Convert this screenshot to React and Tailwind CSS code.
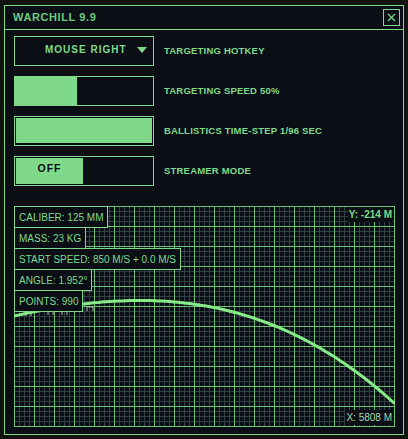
import React from "react";

const GREEN = "#80d98a";

// trajectory samples in graph space (381 x 221)
function trajectoryPath() {
  const pts = [];
  for (let x = 0; x <= 380; x += 4) {
    const d = x - 126;
    const y = 94.5 + 0.001179 * d * d + 0.000001611 * d * d * d;
    pts.push(`${x},${y.toFixed(1)}`);
  }
  return "M" + pts.join(" L");
}

function Grid() {
  const w = 381;
  const h = 221;
  const minor = [];
  const major = [];
  for (let x = 0; x <= 380; x += 5) {
    (x % 20 === 0 ? major : minor).push(
      <line key={"v" + x} x1={x + 0.5} y1={0} x2={x + 0.5} y2={h} />
    );
  }
  for (let y = 0; y <= 220; y += 5) {
    (y % 20 === 0 ? major : minor).push(
      <line key={"h" + y} x1={0} y1={y + 0.5} x2={w} y2={y + 0.5} />
    );
  }
  return (
    <svg width={w} height={h} className="absolute inset-0">
      <g stroke="#323f44" strokeWidth="1">{minor}</g>
      <g stroke="#6cc177" strokeWidth="1">{major}</g>
      <g fill="none" stroke="#b8c8b8" strokeWidth="1.2" opacity="0.8">
        <path d="M12 110 v-5 h5 v5" />
        <path d="M34 109 v-5 h5 v5" />
        <path d="M48 109 v-5 h5 v5" />
        <path d="M73 105 v-4 h6 v4" />
      </g>
      <path
        d={trajectoryPath()}
        fill="none"
        stroke="#86ec86"
        strokeWidth="3"
        strokeLinecap="round"
        strokeLinejoin="round"
      />
    </svg>
  );
}

function InfoBox({ children }) {
  return (
    <div className="self-start -mt-px first:mt-0 border border-[#80d98a] bg-[#0b0e15] h-[22px] px-[4px] flex items-center text-[10px] text-[#80d98a] whitespace-nowrap">
      {children}
    </div>
  );
}

function Row({ label, children }) {
  return (
    <div className="flex items-center">
      <div className="w-[140px] h-[30px] border border-[#80d98a] flex">
        {children}
      </div>
      <span className="ml-[10px] text-[9.5px] font-bold tracking-[0.2px] text-[#80d98a]">
        {label}
      </span>
    </div>
  );
}

export default function App() {
  return (
    <div
      className="min-h-screen bg-[#13130f] pt-[5px] pl-[4px]"
      style={{ fontFamily: '"Liberation Sans", Arial, sans-serif' }}
    >
      <div className="w-[400px] h-[430px] border border-[#80d98a] bg-[#0b0e15] flex flex-col">
        {/* title bar */}
        <div className="h-[24px] border-b border-[#80d98a] flex items-center justify-between pl-[8px] pr-[3px]">
          <span className="text-[11px] font-bold tracking-[0.6px] text-[#6fcb7c]">
            WARCHILL 9.9
          </span>
          <button className="w-[17px] h-[17px] border border-[#80d98a] flex items-center justify-center">
            <svg width="9" height="9" viewBox="0 0 9 9">
              <path d="M1 1 L8 8 M8 1 L1 8" stroke={GREEN} strokeWidth="1.2" />
            </svg>
          </button>
        </div>

        <div className="flex flex-col px-[9px] pt-[6px]">
          <div className="flex flex-col gap-[10px]">
            <Row label="TARGETING HOTKEY">
              <div className="flex-1 flex items-center pl-[30px] pr-[6px] pb-[3px]">
                <span className="text-[10px] font-bold tracking-[1px] text-[#80d98a]">
                  MOUSE RIGHT
                </span>
                <svg width="10" height="6" viewBox="0 0 10 6" className="ml-auto">
                  <path d="M0 0 H10 L5 6 Z" fill={GREEN} />
                </svg>
              </div>
            </Row>
            <Row label="TARGETING SPEED 50%">
              <div className="w-[62px] h-full bg-[#80d98a]" />
            </Row>
            <Row label="BALLISTICS TIME-STEP 1/96 SEC">
              <div className="flex-1 p-px pb-[2px]">
                <div className="w-full h-full bg-[#80d98a]" />
              </div>
            </Row>
            <Row label="STREAMER MODE">
              <div className="p-px flex">
                <div className="w-[67px] h-full bg-[#80d98a] flex items-center justify-center pb-[4px]">
                  <span className="text-[10.5px] font-bold tracking-[1px] text-[#0b0e15]">
                    OFF
                  </span>
                </div>
              </div>
            </Row>
          </div>

          {/* trajectory graph */}
          <div className="relative mt-[20px] w-[381px] h-[221px]">
            <Grid />
            <div className="relative flex flex-col">
              <InfoBox>CALIBER: 125 MM</InfoBox>
              <InfoBox>MASS: 23 KG</InfoBox>
              <InfoBox>START SPEED: 850 M/S + 0.0 M/S</InfoBox>
              <InfoBox>ANGLE: 1.952°</InfoBox>
              <InfoBox>POINTS: 990</InfoBox>
            </div>
            <span className="absolute top-[1px] right-[2px] px-[1px] bg-[#0b0e15] text-[10px] font-bold text-[#80d98a]">
              Y: -214 M
            </span>
            <span className="absolute bottom-[2px] right-[2px] px-[1px] bg-[#0b0e15] text-[10px] text-[#a8d8ac]">
              X: 5808 M
            </span>
          </div>
        </div>
      </div>
    </div>
  );
}
